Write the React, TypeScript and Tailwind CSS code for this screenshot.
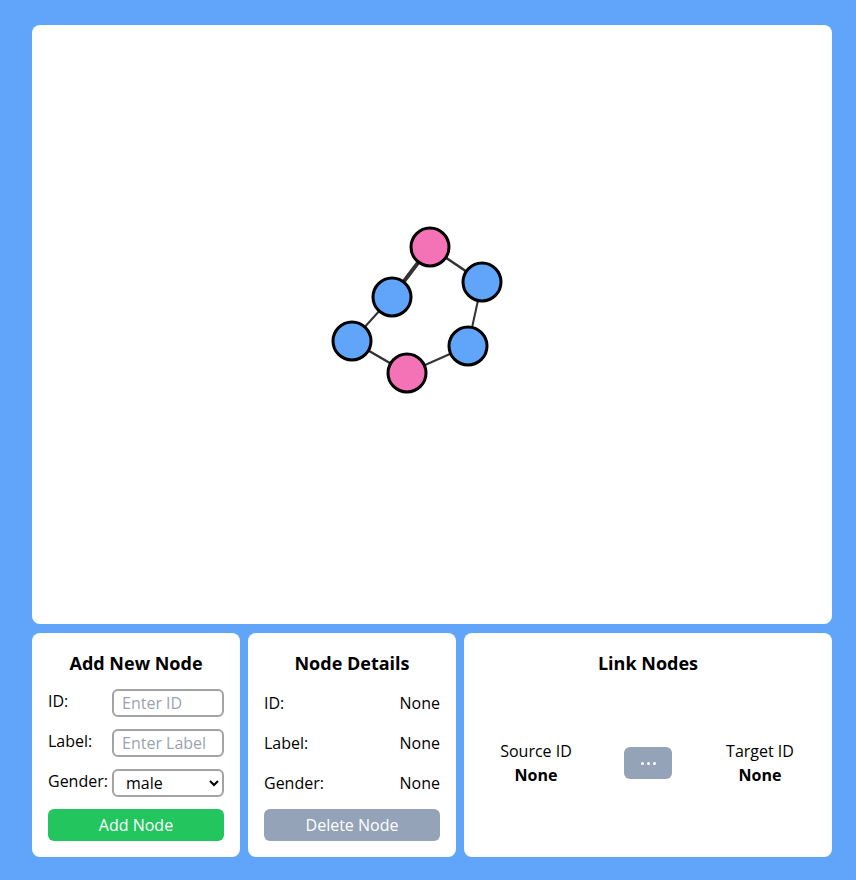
import React from "react";

const nodes = [
  { id: "a", x: 398, y: 222, c: "#f472b6" },
  { id: "b", x: 450, y: 257, c: "#60a5fa" },
  { id: "c", x: 360, y: 272, c: "#60a5fa" },
  { id: "d", x: 320, y: 316, c: "#60a5fa" },
  { id: "e", x: 436, y: 321, c: "#60a5fa" },
  { id: "f", x: 375, y: 348, c: "#f472b6" },
];

const links: [string, string, number][] = [
  ["a", "c", 4],
  ["a", "b", 2.5],
  ["b", "e", 2],
  ["e", "f", 2],
  ["f", "d", 2.5],
  ["d", "c", 2],
];

function Graph() {
  const get = (id: string) => nodes.find((n) => n.id === id)!;
  return (
    <svg width="800" height="599" className="block">
      {links.map(([s, t, w], i) => {
        const a = get(s);
        const b = get(t);
        return <line key={i} x1={a.x} y1={a.y} x2={b.x} y2={b.y} stroke="#333" strokeWidth={w} />;
      })}
      {nodes.map((n) => (
        <circle key={n.id} cx={n.x} cy={n.y} r={19} fill={n.c} stroke="#000" strokeWidth={3} />
      ))}
    </svg>
  );
}

export default function App() {
  return (
    <div
      className="w-[856px] h-[880px] bg-[#60a5fa] pl-8 pr-6 pt-[25px] flex flex-col gap-[9px] text-black"
      style={{ fontFamily: '"Open Sans", "Liberation Sans", sans-serif' }}
    >
      <div className="h-[599px] bg-white rounded-lg overflow-hidden">
        <Graph />
      </div>
      <div className="flex gap-2 h-[224px]">
        <div className="w-[208px] bg-white rounded-lg p-4 flex flex-col">
          <h2 className="text-lg font-bold text-center leading-7 mb-3">Add New Node</h2>
          <div className="flex flex-col gap-3">
            <div className="flex justify-between items-start h-7">
              <span className="text-base leading-6">ID:</span>
              <input
                placeholder="Enter ID"
                className="w-28 h-7 border-2 border-[#a3a3a3] rounded-md px-2 text-base placeholder:text-[#9ca3af] outline-none"
              />
            </div>
            <div className="flex justify-between items-start h-7">
              <span className="text-base leading-6">Label:</span>
              <input
                placeholder="Enter Label"
                className="w-28 h-7 border-2 border-[#a3a3a3] rounded-md px-2 text-base placeholder:text-[#9ca3af] outline-none"
              />
            </div>
            <div className="flex justify-between items-start h-7">
              <span className="text-base leading-6">Gender:</span>
              <select className="w-28 h-7 border-2 border-[#a3a3a3] rounded-md px-2 text-base bg-white">
                <option>male</option>
                <option>female</option>
              </select>
            </div>
            <button className="h-8 bg-[#22c55e] text-white rounded-md text-base">Add Node</button>
          </div>
        </div>
        <div className="w-[208px] bg-white rounded-lg p-4 flex flex-col">
          <h2 className="text-lg font-bold text-center leading-7 mb-3">Node Details</h2>
          <div className="flex flex-col gap-3">
            <div className="flex justify-between items-center h-7 text-base">
              <span>ID:</span>
              <span>None</span>
            </div>
            <div className="flex justify-between items-center h-7 text-base">
              <span>Label:</span>
              <span>None</span>
            </div>
            <div className="flex justify-between items-center h-7 text-base">
              <span>Gender:</span>
              <span>None</span>
            </div>
            <button className="h-8 bg-[#94a3b8] text-white rounded-md text-base">Delete Node</button>
          </div>
        </div>
        <div className="flex-1 bg-white rounded-lg p-4 flex flex-col">
          <h2 className="text-lg font-bold text-center leading-7">Link Nodes</h2>
          <div className="flex-1 grid grid-cols-3 items-center pt-2">
            <div className="flex flex-col items-center text-base leading-6">
              <span>Source ID</span>
              <span className="font-bold">None</span>
            </div>
            <div className="flex justify-center">
              <button className="w-12 h-8 bg-[#94a3b8] text-white rounded-md flex items-center justify-center gap-[3px]">
                <span className="w-[3px] h-[3px] rounded-full bg-white" />
                <span className="w-[3px] h-[3px] rounded-full bg-white" />
                <span className="w-[3px] h-[3px] rounded-full bg-white" />
              </button>
            </div>
            <div className="flex flex-col items-center text-base leading-6">
              <span>Target ID</span>
              <span className="font-bold">None</span>
            </div>
          </div>
        </div>
      </div>
    </div>
  );
}
